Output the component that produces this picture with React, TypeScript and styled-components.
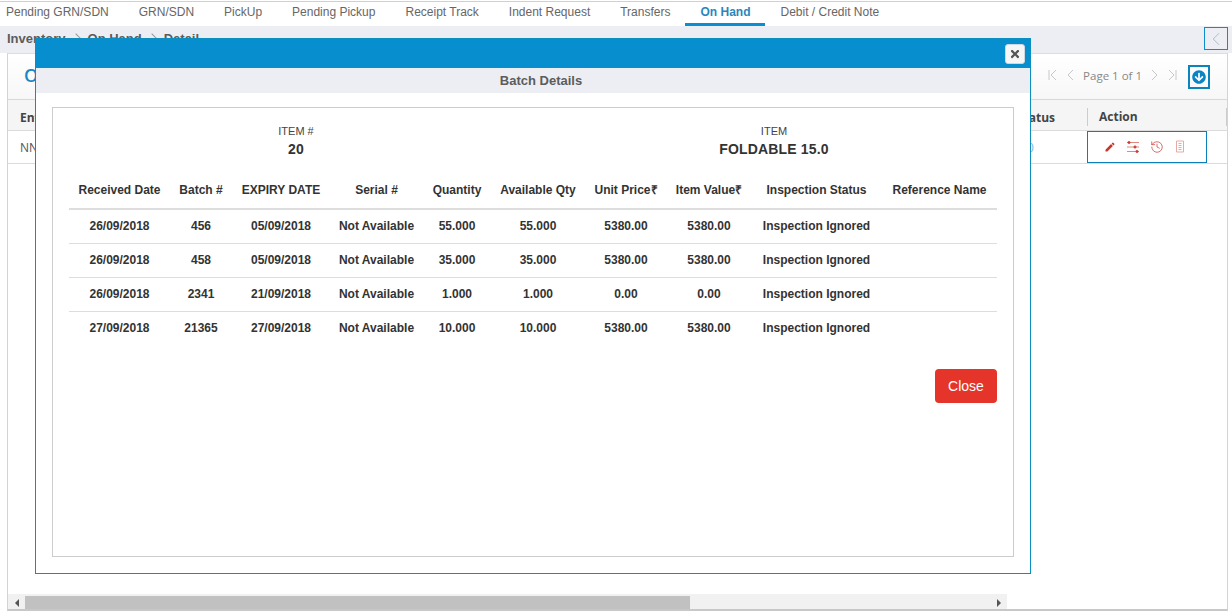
import React from "react";
import styled, { createGlobalStyle } from "styled-components";
import { FaArrowCircleDown, FaTimes } from "react-icons/fa";
import { MdEdit } from "react-icons/md";
import { History, ChevronLeft } from "lucide-react";

const GlobalStyle = createGlobalStyle`
  html, body {
    margin: 0;
    padding: 0;
    background: #fff;
    overflow: hidden;
  }
  * { box-sizing: border-box; }
`;

const Page = styled.div`
  position: relative;
  width: 1232px;
  height: 613px;
  display: flex;
  flex-direction: column;
  overflow: hidden;
  padding-top: 1px;
  font-family: "Liberation Sans", Arial, sans-serif;
  color: #333;
`;

const Tabs = styled.div`
  height: 25px;
  margin-left: -9px;
  border-top: 1px solid #d0d0d0;
  display: flex;
`;

const Tab = styled.div<{ $active?: boolean }>`
  height: 24px;
  padding: 0 15px;
  line-height: 20px;
  font-size: 12px;
  font-weight: ${(p) => (p.$active ? "bold" : "normal")};
  color: ${(p) => (p.$active ? "#2a86bd" : "#666")};
  border-bottom: 3px solid ${(p) => (p.$active ? "#0a8ecf" : "transparent")};
`;

const CrumbBar = styled.div`
  height: 27px;
  background: #eceef3;
  display: flex;
  justify-content: space-between;
  padding: 1px 4px 3px 7px;
`;

const Crumbs = styled.div`
  display: flex;
  align-items: center;
  gap: 6px;
  font-size: 13px;
  font-weight: bold;
  color: #5c5c5c;
`;

const CrumbSep = styled.span`
  width: 8px;
  height: 8px;
  border-top: 1px solid #999;
  border-right: 1px solid #999;
  transform: rotate(45deg);
  margin-right: 2px;
`;

const SideToggle = styled.button`
  width: 24px;
  height: 23px;
  padding: 0;
  background: #eceef3;
  border: 1px solid #0a8ecf;
  color: #9db2c0;
  display: flex;
  align-items: center;
  justify-content: center;
`;

const Panel = styled.div`
  flex: 1;
  margin: 0 4px 2px 7px;
  border: 1px solid #d4d4d4;
  border-bottom: 2px solid #c8c8c8;
  border-top-color: #ddd;
  display: flex;
  flex-direction: column;
  background: #fff;
`;

const PanelHead = styled.div`
  height: 46px;
  padding: 11px 17px 0 16px;
  background: linear-gradient(#fff, #f7f7f7);
  border-bottom: 1px solid #d8d8d8;
  display: flex;
  align-items: flex-start;
  justify-content: space-between;
`;

const PanelTitle = styled.div`
  font-family: "Open Sans", sans-serif;
  font-size: 18px;
  font-weight: 600;
  line-height: 20px;
  color: #1a86c4;
`;

const Pager = styled.div`
  display: flex;
  align-items: center;
  gap: 6px;
  height: 24px;
`;

const PagerText = styled.span`
  font-family: "Open Sans", sans-serif;
  font-size: 11.5px;
  color: #888;
  margin-bottom: 4px;
`;

const PagerIcon = styled.svg`
  width: 12px;
  height: 12px;
  margin-bottom: 4px;
  fill: none;
  stroke: #c4c8cc;
  stroke-width: 1;
`;

const DownloadBtn = styled.button`
  width: 22px;
  height: 24px;
  margin-left: 4px;
  padding: 0;
  background: transparent;
  border: 2px solid #0a84bd;
  color: #0a84c4;
  font-size: 14px;
  display: flex;
  align-items: center;
  justify-content: center;
`;

const GridRow = styled.div<{ $head?: boolean }>`
  height: ${(p) => (p.$head ? "31px" : "33px")};
  padding-top: ${(p) => (p.$head ? "4px" : "0")};
  display: grid;
  grid-template-columns: 1fr 60px 120px 20px;
  align-items: center;
  background: ${(p) => (p.$head ? "#f5f5f5" : "#fff")};
  border-bottom: 1px solid #dcdcdc;
  font-family: "Open Sans", sans-serif;
  font-size: 12px;
  color: ${(p) => (p.$head ? "#444" : "#555")};
  font-weight: ${(p) => (p.$head ? 700 : 400)};
`;

const FirstCell = styled.div`
  padding-left: 12px;
`;

const StatusCell = styled.div`
  display: flex;
  justify-content: flex-end;
  padding-right: 32px;
`;

const ZeroCell = styled.div`
  font-size: 12px;
  color: #7fb8d8;
`;

const ActionHead = styled.div`
  height: 18px;
  line-height: 18px;
  padding-left: 11px;
  border-left: 1px solid #ccc;
`;

const HeadEnd = styled.div`
  height: 18px;
  margin-left: 19px;
  border-left: 1px solid #ccc;
`;

const ActionCell = styled.div`
  height: 32px;
  border: 1px solid #0a7fb8;
  padding: 0 0 1px 16px;
  display: flex;
  align-items: center;
  gap: 10px;
  color: #c9352b;
`;

const SliderIcon = styled.svg`
  width: 14px;
  height: 14px;
  stroke: #d2554c;
  fill: #c9352b;
  stroke-width: 0.7;
`;

const SheetIcon = styled.svg`
  width: 12px;
  height: 13px;
  fill: none;
  stroke: #e8a9a2;
  stroke-width: 1;
`;

const Filler = styled.div`
  flex: 1;
`;

const ScrollBar = styled.div`
  width: 999px;
  height: 15px;
  background: #f1f1f1;
  display: flex;
  align-items: stretch;
  padding-top: 2px;
`;

const ScrollArrow = styled.div<{ $right?: boolean }>`
  width: 17px;
  display: flex;
  align-items: center;
  justify-content: center;
  margin-left: ${(p) => (p.$right ? "auto" : "0")};
  &::before {
    content: "";
    border-style: solid;
    border-width: 4px 0 4px 4px;
    border-color: transparent transparent transparent #555;
    transform: ${(p) => (p.$right ? "none" : "rotate(180deg)")};
  }
`;

const ScrollThumb = styled.div`
  width: 665px;
  background: #c1c1c1;
`;

const Modal = styled.div`
  position: absolute;
  left: 35px;
  top: 38px;
  width: 996px;
  height: 536px;
  background: #fff;
  border: 1px solid #0b8fc0;
  border-bottom-color: #2a86a0;
  display: flex;
  flex-direction: column;
`;

const ModalBar = styled.div`
  height: 29px;
  flex: none;
  background: #078ecf;
  display: flex;
  align-items: center;
  justify-content: flex-end;
  padding-right: 5px;
`;

const CloseIcon = styled.button`
  width: 20px;
  height: 20px;
  padding: 0;
  border: 1px solid #cfd8de;
  border-radius: 3px;
  background: #f6f6f6;
  color: #555;
  font-size: 12px;
  display: flex;
  align-items: center;
  justify-content: center;
`;

const ModalTitle = styled.div`
  height: 25px;
  flex: none;
  background: #eceef3;
  text-align: center;
  font-size: 13px;
  line-height: 25px;
  font-weight: bold;
  color: #5c5c5c;
  padding-left: 16px;
`;

const ModalBody = styled.div`
  flex: 1;
  padding: 14px 16px 16px;
  display: flex;
`;

const DetailBox = styled.div`
  flex: 1;
  border: 1px solid #ccc;
  padding: 16px 16px 0;
  display: flex;
  flex-direction: column;
`;

const ItemInfo = styled.div`
  display: grid;
  grid-template-columns: 1fr 1fr;
  margin: 0 -16px 0 -12px;
  text-align: center;
`;

const InfoLabel = styled.div`
  font-size: 11px;
  line-height: 14px;
  color: #444;
`;

const InfoValue = styled.div`
  font-size: 14px;
  line-height: 22px;
  font-weight: bold;
  letter-spacing: 0.15px;
  color: #333;
`;

const BatchTable = styled.table`
  width: 928px;
  margin-top: 11px;
  table-layout: fixed;
  border-collapse: collapse;
  font-size: 12px;
  color: #333;
  text-align: center;
`;

const Col = styled.col<{ $w: number }>`
  width: ${(p) => p.$w}px;
`;

const Th = styled.th`
  height: 38px;
  padding: 0;
  font-weight: bold;
  border-bottom: 2px solid #ddd;
  white-space: nowrap;
`;

const Td = styled.td`
  height: 34px;
  padding: 0;
  font-weight: bold;
  white-space: nowrap;
`;

const Tr = styled.tr`
  border-bottom: 1px solid #ddd;
  &:last-child {
    border-bottom: none;
  }
`;

const ButtonRow = styled.div`
  display: flex;
  justify-content: flex-end;
  margin-top: 24px;
`;

const CloseButton = styled.button`
  width: 62px;
  height: 34px;
  border: none;
  border-radius: 4px;
  background: #e5342a;
  color: #fff;
  font-family: "Liberation Sans", Arial, sans-serif;
  font-size: 14px;
`;

const tabs = [
  "Pending GRN/SDN",
  "GRN/SDN",
  "PickUp",
  "Pending Pickup",
  "Receipt Track",
  "Indent Request",
  "Transfers",
  "On Hand",
  "Debit / Credit Note",
];

const columns: [string, number][] = [
  ["Received Date", 101],
  ["Batch #", 62],
  ["EXPIRY DATE", 98],
  ["Serial #", 93],
  ["Quantity", 68],
  ["Available Qty", 94],
  ["Unit Price₹", 82],
  ["Item Value₹", 84],
  ["Inspection Status", 131],
  ["Reference Name", 115],
];

const rows = [
  ["26/09/2018", "456", "05/09/2018", "55.000", "5380.00"],
  ["26/09/2018", "458", "05/09/2018", "35.000", "5380.00"],
  ["26/09/2018", "2341", "21/09/2018", "1.000", "0.00"],
  ["27/09/2018", "21365", "27/09/2018", "10.000", "5380.00"],
];

export default function App() {
  return (
    <Page>
      <GlobalStyle />
      <Tabs>
        {tabs.map((t) => (
          <Tab key={t} $active={t === "On Hand"}>
            {t}
          </Tab>
        ))}
      </Tabs>
      <CrumbBar>
        <Crumbs>
          Inventory <CrumbSep /> On Hand <CrumbSep /> Detail
        </Crumbs>
        <SideToggle>
          <ChevronLeft size={24} strokeWidth={0.9} />
        </SideToggle>
      </CrumbBar>
      <Panel>
        <PanelHead>
          <PanelTitle>On Hand</PanelTitle>
          <Pager>
            <PagerIcon viewBox="0 0 12 12">
              <path d="M2 1v10M9 1L4 6l5 5" />
            </PagerIcon>
            <PagerIcon viewBox="0 0 12 12">
              <path d="M8 1L3 6l5 5" />
            </PagerIcon>
            <PagerText>Page 1 of 1</PagerText>
            <PagerIcon viewBox="0 0 12 12">
              <path d="M4 1l5 5-5 5" />
            </PagerIcon>
            <PagerIcon viewBox="0 0 12 12">
              <path d="M10 1v10M3 1l5 5-5 5" />
            </PagerIcon>
            <DownloadBtn>
              <FaArrowCircleDown />
            </DownloadBtn>
          </Pager>
        </PanelHead>
        <GridRow $head>
          <FirstCell>Entity</FirstCell>
          <StatusCell>Status</StatusCell>
          <ActionHead>Action</ActionHead>
          <HeadEnd />
        </GridRow>
        <GridRow>
          <FirstCell>NNN</FirstCell>
          <ZeroCell>0</ZeroCell>
          <ActionCell>
            <MdEdit size={12} />
            <SliderIcon viewBox="0 0 14 14">
              <path d="M1 2.5h12M1 7h12M1 11.5h12" fill="none" />
              <circle cx="3" cy="2.5" r="1.2" />
              <circle cx="9" cy="7" r="1.2" />
              <circle cx="11" cy="11.5" r="1.2" />
            </SliderIcon>
            <History size={14} strokeWidth={1.2} />
            <SheetIcon viewBox="0 0 12 13">
              <path d="M2.5 1h7v11h-7zM4.5 3.5h3M4.5 5.5h3M4.5 7.5h3M4.5 9.5h3" />
            </SheetIcon>
          </ActionCell>
        </GridRow>
        <Filler />
        <ScrollBar>
          <ScrollArrow />
          <ScrollThumb />
          <ScrollArrow $right />
        </ScrollBar>
      </Panel>

      <Modal>
        <ModalBar>
          <CloseIcon>
            <FaTimes />
          </CloseIcon>
        </ModalBar>
        <ModalTitle>Batch Details</ModalTitle>
        <ModalBody>
          <DetailBox>
            <ItemInfo>
              <div>
                <InfoLabel>ITEM #</InfoLabel>
                <InfoValue>20</InfoValue>
              </div>
              <div>
                <InfoLabel>ITEM</InfoLabel>
                <InfoValue>FOLDABLE 15.0</InfoValue>
              </div>
            </ItemInfo>
            <BatchTable>
              <colgroup>
                {columns.map(([name, w]) => (
                  <Col key={name} $w={w} />
                ))}
              </colgroup>
              <thead>
                <tr>
                  {columns.map(([name]) => (
                    <Th key={name}>{name}</Th>
                  ))}
                </tr>
              </thead>
              <tbody>
                {rows.map((r) => (
                  <Tr key={r[1]}>
                    <Td>{r[0]}</Td>
                    <Td>{r[1]}</Td>
                    <Td>{r[2]}</Td>
                    <Td>Not Available</Td>
                    <Td>{r[3]}</Td>
                    <Td>{r[3]}</Td>
                    <Td>{r[4]}</Td>
                    <Td>{r[4]}</Td>
                    <Td>Inspection Ignored</Td>
                    <Td />
                  </Tr>
                ))}
              </tbody>
            </BatchTable>
            <ButtonRow>
              <CloseButton>Close</CloseButton>
            </ButtonRow>
          </DetailBox>
        </ModalBody>
      </Modal>
    </Page>
  );
}
